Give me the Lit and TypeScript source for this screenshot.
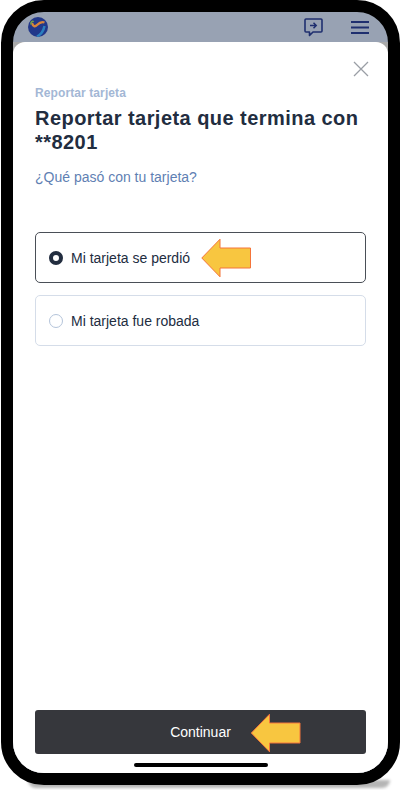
import { LitElement, html, css } from "lit";
import { customElement } from "lit/decorators.js";

const arrow = (cls: string) => html`<svg class="arrow ${cls}" viewBox="0 0 50 40"><path d="M0.8 20 L19 1.2 V10 H49.5 V30 H19 V38.8 Z" fill="#f8c640" stroke="#f4743a" stroke-width="1"/></svg>`;

@customElement("app-root")
export class AppRoot extends LitElement {
  static styles = css`
    :host { display: block; width: 402px; height: 790px; background: #fff; overflow: hidden; font-family: "Liberation Sans", Arial, sans-serif; position: relative; }
    .shadow { position: absolute; left: 28px; right: 12px; top: 780px; height: 8px; background: #b5b5b5; filter: blur(1.5px); border-radius: 0 0 30px 30px; }
    .frame { position: relative; box-sizing: border-box; width: 399px; height: 785px; margin-left: 1px; border: 12px solid #000; border-radius: 43px; background: #98a2b3; overflow: hidden; display: flex; flex-direction: column; }
    .top { flex: 0 0 30px; display: flex; align-items: center; padding: 0 19px 0 15px; gap: 28px; }
    .logo { width: 20px; height: 20px; }
    .spacer { flex: 1; }
    .top svg.i { display: block; }
    .under { flex: 1; min-height: 0; display: flex; background: #a9a9a9; }
    .sheet { flex: 1; background: #fff; border-radius: 12px 12px 0 0; display: flex; flex-direction: column; padding: 0 22px 19px; position: relative; min-width: 0; }
    .close { position: absolute; right: 19px; top: 19px; width: 16px; height: 16px; }
    .eyebrow { margin: 43px 0 0; color: #a3b7d5; font-size: 12px; font-weight: 700; line-height: 16px; letter-spacing: 0.1px; }
    h1 { margin: 5px 0 0; color: #222d3f; font-size: 20px; line-height: 24px; font-weight: 700; letter-spacing: 0.45px; }
    .q { margin: 14px 0 0; color: #5f7fb3; font-size: 14px; line-height: 18px; }
    .opts { display: flex; flex-direction: column; gap: 12px; margin-top: 46px; }
    .opt { position: relative; box-sizing: border-box; height: 51px; border: 1px solid #d5dde9; border-radius: 5px; display: flex; align-items: center; gap: 8px; padding: 0 13px; color: #222d3f; font-size: 14px; }
    .opt.sel { border-color: #4a4f57; }
    .radio { box-sizing: border-box; width: 14px; height: 14px; border-radius: 50%; border: 1px solid #b4c4da; flex: none; }
    .sel .radio { border: 4px solid #222d3f; background: #fff; }
    .btn { position: relative; margin-top: auto; height: 44px; background: #36373c; color: #fff; border-radius: 3px; display: flex; align-items: center; justify-content: center; font-size: 14px; }
    .arrow { position: absolute; display: block; }
    .a1 { left: 165px; top: 5px; width: 50px; height: 40px; }
    .a2 { left: 215px; top: 3px; width: 51px; height: 40px; }
    .home { position: absolute; left: 121px; bottom: 6px; width: 134px; height: 4px; border-radius: 2px; background: #000; }
  `;

  render() {
    return html`
      <div class="shadow"></div>
      <div class="frame">
        <div class="top">
          <svg class="logo" viewBox="0 0 20 20">
            <defs><clipPath id="c"><circle cx="10" cy="10" r="10"/></clipPath></defs>
            <circle cx="10" cy="10" r="10" fill="#22388a"/>
            <g clip-path="url(#c)" fill="none">
              <path d="M9 19.5 C13 17.5 15.5 14 16.5 9" stroke="#2b7fbe" stroke-width="2.5"/>
              <path d="M4 6 C5 9.5 7 10 9 8 C11.5 5.5 14 4.5 16.5 5.5" stroke="#d9853c" stroke-width="2.4"/>
              <path d="M2.8 7.5 C3 4.5 4.5 3.5 5.5 5" stroke="#6f9f4a" stroke-width="1.6"/>
            </g>
          </svg>
          <div class="spacer"></div>
          <svg class="i" width="20" height="20" viewBox="0 0 20 20" fill="none" stroke="#1f2f6f" stroke-width="1.6">
            <path d="M3 2 H18 A1 1 0 0 1 19 3 V14 A1 1 0 0 1 18 15 H10 L6.5 18.5 V15 H3 A1 1 0 0 1 2 14 V3 A1 1 0 0 1 3 2 Z" stroke-linejoin="round"/>
            <path d="M7 8.5 H13 M10.5 5.8 L13.2 8.5 L10.5 11.2" stroke-width="1.5"/>
          </svg>
          <svg class="i" width="18" height="13" viewBox="0 0 18 13" fill="none" stroke="#1f2f6f" stroke-width="2">
            <path d="M0 1 H18 M0 6.5 H18 M0 12 H18"/>
          </svg>
        </div>
        <div class="under">
          <div class="sheet">
            <svg class="close" viewBox="0 0 16 16" fill="none" stroke="#9a9ea5" stroke-width="1.3"><path d="M1 1 L15 15 M15 1 L1 15"/></svg>
            <p class="eyebrow">Reportar tarjeta</p>
            <h1>Reportar tarjeta que termina con **8201</h1>
            <p class="q">¿Qué pasó con tu tarjeta?</p>
            <div class="opts">
              <div class="opt sel"><span class="radio"></span>Mi tarjeta se perdió${arrow("a1")}</div>
              <div class="opt"><span class="radio"></span>Mi tarjeta fue robada</div>
            </div>
            <div class="btn">Continuar${arrow("a2")}</div>
          </div>
        </div>
        <div class="home"></div>
      </div>
    `;
  }
}
